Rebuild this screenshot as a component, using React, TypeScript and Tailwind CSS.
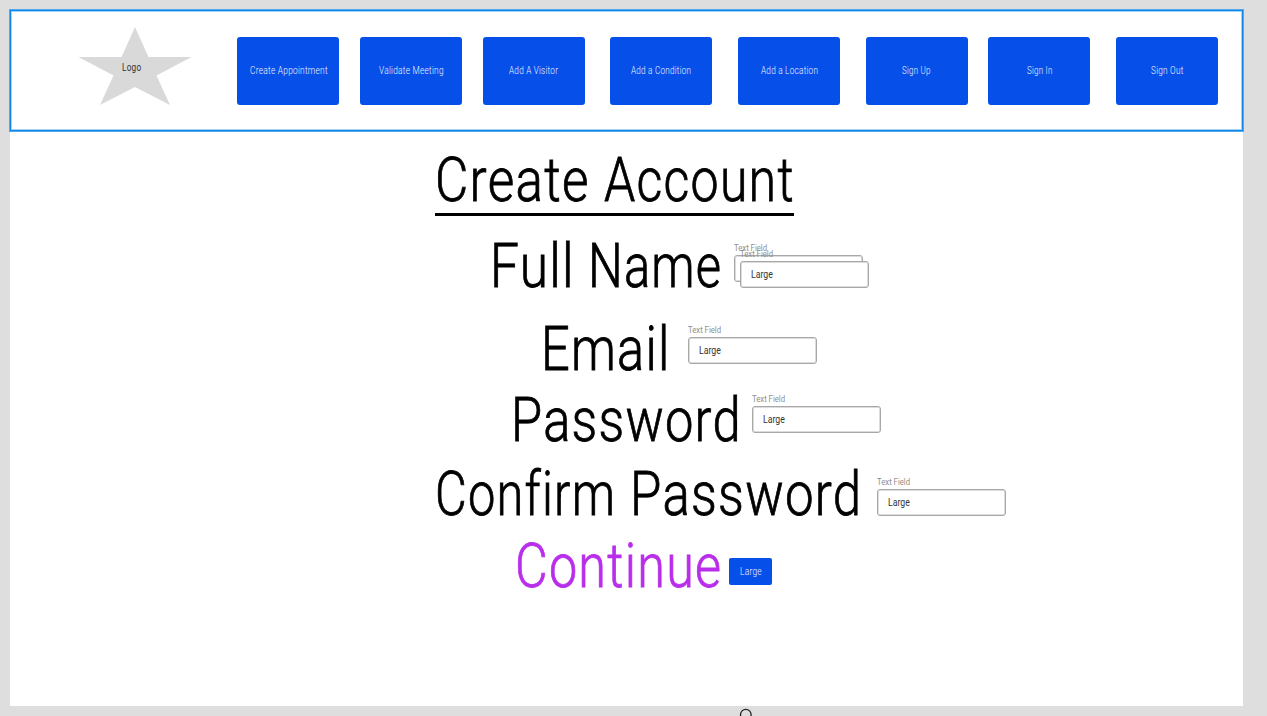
import { useLayoutEffect, useRef } from "react";

/** Condensed text: squeezes its glyphs horizontally so that they fill the box's width. */
function Condensed({ text, className }: { text: string; className: string }) {
  const box = useRef<HTMLSpanElement>(null);
  const inner = useRef<HTMLSpanElement>(null);
  useLayoutEffect(() => {
    if (!box.current || !inner.current) return;
    const scale = box.current.getBoundingClientRect().width / inner.current.offsetWidth;
    inner.current.style.transform = `scaleX(${scale})`;
  }, [text]);
  return (
    <span ref={box} className={`block shrink-0 ${className}`}>
      <span ref={inner} className="inline-block origin-left whitespace-nowrap align-top">
        {text}
      </span>
    </span>
  );
}

const navItems = [
  { label: "Create Appointment", gap: "", width: "w-[78px]" },
  { label: "Validate Meeting", gap: "ml-[20.6px]", width: "w-[65px]" },
  { label: "Add A Visitor", gap: "ml-[20.6px]", width: "w-[49px]" },
  { label: "Add a Condition", gap: "ml-[25.7px]", width: "w-[60.5px]" },
  { label: "Add a Location", gap: "ml-[25.7px]", width: "w-[57px]" },
  { label: "Sign Up", gap: "ml-[25.7px]", width: "w-[29px]" },
  { label: "Sign In", gap: "ml-[20.6px]", width: "w-[26px]" },
  { label: "Sign Out", gap: "ml-[25.7px]", width: "w-[33px]" },
];

function Header() {
  return (
    <header className="flex h-[123px] w-[1235px] border border-[#4fa9ee] bg-white shadow-[inset_0_0_0_1px_#0f86e8,inset_0_0_0_2px_#a5d3f7]">
      <div className="relative ml-[68px] mt-[16px] h-[80px] w-[114px] shrink-0">
        <svg viewBox="0 0 114 80" className="h-[80px] w-[114px]" fill="#d9d9d9">
          <path d="M57 1 70.5 31H113.5L78.5 49.5 92 79 57 61 22 79 35.5 49.5 .5 31H43.5Z" />
        </svg>
        <Condensed
          text="Logo"
          className="absolute left-[44px] top-[35px] w-[19.5px] text-[10.5px] leading-[14px] tracking-[0.03em] text-[#333]"
        />
      </div>
      <nav className="ml-[45.4px] mt-[27px] flex">
        {navItems.map((item) => (
          <button
            key={item.label}
            className={`flex h-[68px] w-[102px] shrink-0 items-center justify-center rounded-[3px] bg-[#074fe9] pl-[0.6px] text-[10.5px] font-light leading-[14px] tracking-[0.03em] text-[#f2f6ff] ${item.gap}`}
          >
            <Condensed text={item.label} className={item.width} />
          </button>
        ))}
      </nav>
    </header>
  );
}

function TextField({ className = "" }: { className?: string }) {
  return (
    <div className={`w-[129px] shrink-0 font-normal tracking-normal [-webkit-text-stroke:0] ${className}`}>
      <Condensed text="Text Field" className="h-[14px] w-[33.5px] text-[9px] leading-[14px] text-[#8f8f8f]" />
      <div className="flex h-[27px] items-center rounded-[3px] border border-[#a8a8a8] bg-white pl-[9.5px] shadow-[inset_0_0_0_1px_#dcdcdc]">
        <Condensed text="Large" className="w-[21.5px] text-[10.5px] leading-[14px] text-[#333]" />
      </div>
    </div>
  );
}

export default function App() {
  return (
    <div
      className="relative h-[716px] w-[1267px] overflow-hidden bg-[#dedede] pl-[9px] pt-[9px]"
      style={{ fontFamily: 'Roboto, "Liberation Sans", sans-serif' }}
    >
      <Header />
      <main className="ml-px flex h-[574px] w-[1233px] flex-col bg-white pt-[17px] text-[60.5px] font-light leading-[64px] tracking-[0.025em] text-black [-webkit-text-stroke:0.8px] [font-variant-ligatures:none]">
        <div className="flex h-[86px] pl-[425px]">
          <h1 className="h-[66.5px] font-light">
            <span className="flex">
              <Condensed text="Create" className="w-[155px]" />
              <Condensed text="Account" className="ml-[14px] w-[191px]" />
            </span>
            <span className="block h-[2.5px] w-[359px] bg-black" />
          </h1>
        </div>
        <div className="flex h-[83px] pl-[480px]">
          <Condensed text="Full" className="w-[85px]" />
          <Condensed text="Name" className="ml-[13px] w-[134px]" />
          <div className="relative ml-[12px] mt-[6px]">
            <TextField />
            <TextField className="absolute left-[6px] top-[6px]" />
          </div>
        </div>
        <div className="flex h-[71px] pl-[531px]">
          <Condensed text="Email" className="w-[129.5px]" />
          <TextField className="ml-[17.5px] mt-[5px]" />
        </div>
        <div className="flex h-[74px] pl-[500.5px]">
          <Condensed text="Password" className="w-[231px]" />
          <TextField className="ml-[10.5px] mt-[3px]" />
        </div>
        <div className="flex h-[72px] pl-[424.5px]">
          <Condensed text="Confirm" className="w-[181.5px]" />
          <Condensed text="Password" className="ml-[13.5px] w-[232.5px]" />
          <TextField className="ml-[15px] mt-[12px]" />
        </div>
        <div className="flex pl-[504.5px]">
          <Condensed text="Continue" className="w-[207px] text-[#b92eea]" />
          <button className="ml-[7.5px] mt-[23px] flex h-[27px] w-[43px] items-center justify-center rounded-[2px] bg-[#074fe9] text-[10.5px] leading-[14px] tracking-[0.03em] text-[#f2f6ff] [-webkit-text-stroke:0]">
            <Condensed text="Large" className="w-[21.5px]" />
          </button>
        </div>
      </main>
      <svg viewBox="0 0 14 8" className="absolute bottom-0 left-[739px] h-[8px] w-[14px]" fill="none">
        <circle cx="6.8" cy="6.6" r="5.3" stroke="#222" strokeWidth="1.3" />
      </svg>
    </div>
  );
}
